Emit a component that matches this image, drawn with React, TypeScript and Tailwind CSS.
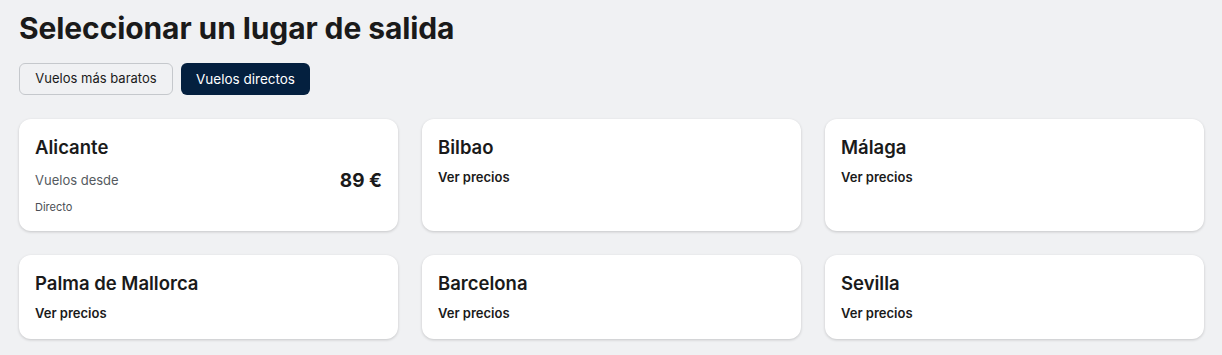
import React from "react";

type Item = { city: string; price?: string };

const rows: Item[] = [
  { city: "Alicante", price: "89 €" },
  { city: "Bilbao" },
  { city: "Málaga" },
  { city: "Palma de Mallorca" },
  { city: "Barcelona" },
  { city: "Sevilla" },
];

function Card({ item }: { item: Item }) {
  return (
    <div className="bg-white rounded-xl shadow-[0_1px_3px_rgba(0,0,0,0.18)] px-4 py-4 flex flex-col gap-2">
      <div className="text-[18.5px] leading-6 font-semibold text-[#1a1a1a]">{item.city}</div>
      {item.price ? (
        <div className="flex flex-col gap-1">
          <div className="flex items-center justify-between h-7">
            <span className="text-[13px] text-[#555a60]">Vuelos desde</span>
            <span className="text-[19px] font-bold text-[#1a1a1a]">{item.price}</span>
          </div>
          <div className="text-[11px] leading-4 text-[#4a4f55]">Directo</div>
        </div>
      ) : (
        <div className="text-[13px] leading-5 font-semibold text-[#1a1a1a]">Ver precios</div>
      )}
    </div>
  );
}

export default function App() {
  return (
    <div
      className="w-[1222px] h-[355px] bg-[#f0f1f3] pl-[19px] pr-[18px] pt-[8px] overflow-hidden"
      style={{ fontFamily: "Inter, 'Noto Sans', sans-serif" }}
    >
      <h1 className="text-[30px] leading-10 font-bold text-[#1a1a1a] tracking-[-0.1px]">
        Seleccionar un lugar de salida
      </h1>
      <div className="flex gap-2 mt-[15px]">
        <button className="h-8 w-[154px] rounded-md border border-[#c5c8cc] bg-[#f0f1f3] text-[13px] text-[#1a1a1a]">
          Vuelos más baratos
        </button>
        <button className="h-8 w-[129px] rounded-md bg-[#04203f] text-[13.5px] text-white">
          Vuelos directos
        </button>
      </div>
      <div className="grid grid-cols-3 gap-x-6 gap-y-6 mt-6">
        {rows.map((r) => (
          <Card key={r.city} item={r} />
        ))}
      </div>
    </div>
  );
}
